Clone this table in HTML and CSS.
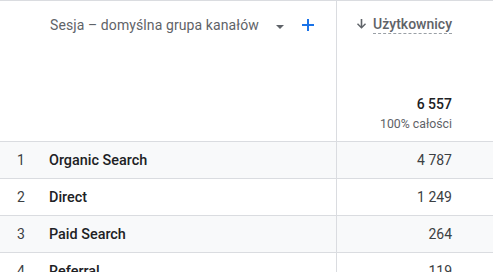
FILE: index.html
```html
<!DOCTYPE html>
<html lang="pl">
<head>
<meta charset="utf-8">
<link rel="stylesheet" href="styles.css">
</head>
<body>
<div class="table">
  <div class="head">
    <div class="col-dim">
      <span class="dim-label">Sesja – domyślna grupa kanałów</span>
      <svg class="caret" width="8" height="4" viewBox="0 0 8 4"><path d="M0 0h8L4 4z" fill="#5f6368"/></svg>
      <svg class="plus" width="12" height="12" viewBox="0 0 12 12"><path d="M5 0h2v5h5v2H7v5H5V7H0V5h5z" fill="#1a73e8"/></svg>
    </div>
    <div class="col-metric">
      <div class="metric-title">
        <svg class="arrow" width="9" height="10" viewBox="0 0 9 10"><path d="M3.7 0h1.6v6.9L8 4.2 9 5.3 4.5 9.8 0 5.3l1-1.1 2.7 2.7z" fill="#5f6368"/></svg>
        <span class="metric-name">Użytkownicy</span>
      </div>
      <div class="total">6 557</div>
      <div class="total-sub">100% całości</div>
    </div>
  </div>
  <div class="row shade"><span class="idx">1</span><span class="name">Organic Search</span><span class="val">4 787</span></div>
  <div class="row"><span class="idx">2</span><span class="name">Direct</span><span class="val">1 249</span></div>
  <div class="row shade"><span class="idx">3</span><span class="name">Paid Search</span><span class="val">264</span></div>
  <div class="row"><span class="idx">4</span><span class="name">Referral</span><span class="val">119</span></div>
</div>
</body>
</html>
```
FILE: styles.css
```css
html, body { margin: 0; padding: 0; background: #fff; }
body { font-family: Roboto, "Noto Sans", sans-serif; color: #202124; overflow: hidden; width: 493px; height: 272px; }
.table { border-top: 1px solid #dadce0; }
.head { display: flex; height: 140px; border-bottom: 1px solid #dadce0; }
.col-dim { width: 337px; box-sizing: border-box; display: flex; align-items: flex-start; padding: 15px 0 0 50px; border-right: 1px solid #dadce0; }
.dim-label { font-size: 14px; color: #5f6368; line-height: 18px; letter-spacing: 0.1px; }
.caret { margin: 9px 0 0 17px; }
.plus { margin: 3px 0 0 18px; }
.col-metric { flex: 1; display: flex; flex-direction: column; align-items: flex-end; padding: 15px 41px 0 0; }
.metric-title { display: flex; align-items: flex-start; }
.arrow { margin: 3px 7px 0 0; }
.metric-name { font-size: 14px; font-weight: 500; color: #5f6368; line-height: 16px; padding-bottom: 1px; border-bottom: 1px dashed #9aa0a6; }
.total { margin-top: 62px; font-size: 14px; font-weight: 500; color: #202124; line-height: 16px; }
.total-sub { margin-top: 5px; font-size: 12.3px; color: #5f6368; line-height: 14px; }
.row { display: flex; height: 36px; align-items: center; border-bottom: 1px solid #dadce0; font-size: 14px; }
.row.shade { background: #f8f9fa; }
.idx { width: 49px; box-sizing: border-box; padding-left: 17px; color: #3c4043; }
.name { width: 287px; font-size: 14.4px; font-weight: 500; border-right: 1px solid #dadce0; align-self: stretch; display: flex; align-items: center; }
.val { flex: 1; text-align: right; padding-right: 41px; color: #3c4043; }
```
